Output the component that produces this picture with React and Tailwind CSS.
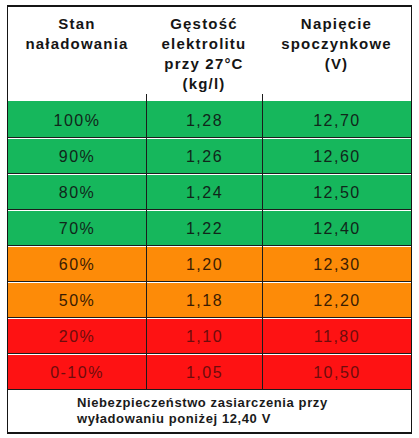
import React from "react";

const rows = [
  ["100%", "1,28", "12,70", "g"],
  ["90%", "1,26", "12,60", "g"],
  ["80%", "1,24", "12,50", "g"],
  ["70%", "1,22", "12,40", "g"],
  ["60%", "1,20", "12,30", "o"],
  ["50%", "1,18", "12,20", "o"],
  ["20%", "1,10", "11,80", "r"],
  ["0-10%", "1,05", "10,50", "r"],
];

const bg = { g: "bg-[#16b75c]", o: "bg-[#fd8b08]", r: "bg-[#fe1213]" };
const fg = { g: "text-[#10261a]", o: "text-[#3a1c02]", r: "text-[#6e0c0c]" };

function Row({ r, first }) {
  const [a, b, c, k] = r;
  const cell = "flex items-center justify-center pt-[3px]";
  return (
    <div
      className={`grid grid-cols-[138px_116px_149px] h-[36px] ${bg[k]} ${fg[k]} ${
        first ? "" : "border-t border-[#1c1c1c] shadow-[inset_0_1px_0_#ffffff]"
      } text-[16px] tracking-[1.5px]`}
    >
      <div className={cell}>{a}</div>
      <div className={`${cell} border-l border-[#1c1c1c]`}>{b}</div>
      <div className={`${cell} border-l border-[#1c1c1c]`}>{c}</div>
    </div>
  );
}

export default function App() {
  return (
    <div className="w-[419px] h-[438px] bg-white pl-[7px] pt-[5px]" style={{ fontFamily: '"Liberation Sans", Arial, sans-serif' }}>
      <div className="w-[405px] border-x border-t-2 border-b-2 border-[#151515]">
        <div className="grid grid-cols-[138px_116px_149px] h-[94px] text-[15px] font-bold leading-[20px] tracking-[1.2px] text-[#151515] text-center">
          <div className="pt-[7px]">
            <div>Stan</div>
            <div>naładowania</div>
          </div>
          <div className="relative pt-[7px]">
            <div className="absolute left-0 bottom-0 w-px h-[7px] bg-[#1c1c1c]" />
            <div>Gęstość</div>
            <div>elektrolitu</div>
            <div>przy 27°C</div>
            <div>(kg/l)</div>
          </div>
          <div className="relative pt-[7px]">
            <div className="absolute left-0 bottom-0 w-px h-[7px] bg-[#1c1c1c]" />
            <div>Napięcie</div>
            <div>spoczynkowe</div>
            <div>(V)</div>
          </div>
        </div>
        {rows.map((r, i) => (
          <Row key={i} r={r} first={i === 0} />
        ))}
        <div className="h-[43px] border-t border-[#1c1c1c] flex flex-col justify-center pl-[69px] text-[13px] font-bold leading-[16px] tracking-[0.6px] text-[#1a1a1a]">
          <div>Niebezpieczeństwo zasiarczenia przy</div>
          <div>wyładowaniu poniżej 12,40 V</div>
        </div>
      </div>
    </div>
  );
}
